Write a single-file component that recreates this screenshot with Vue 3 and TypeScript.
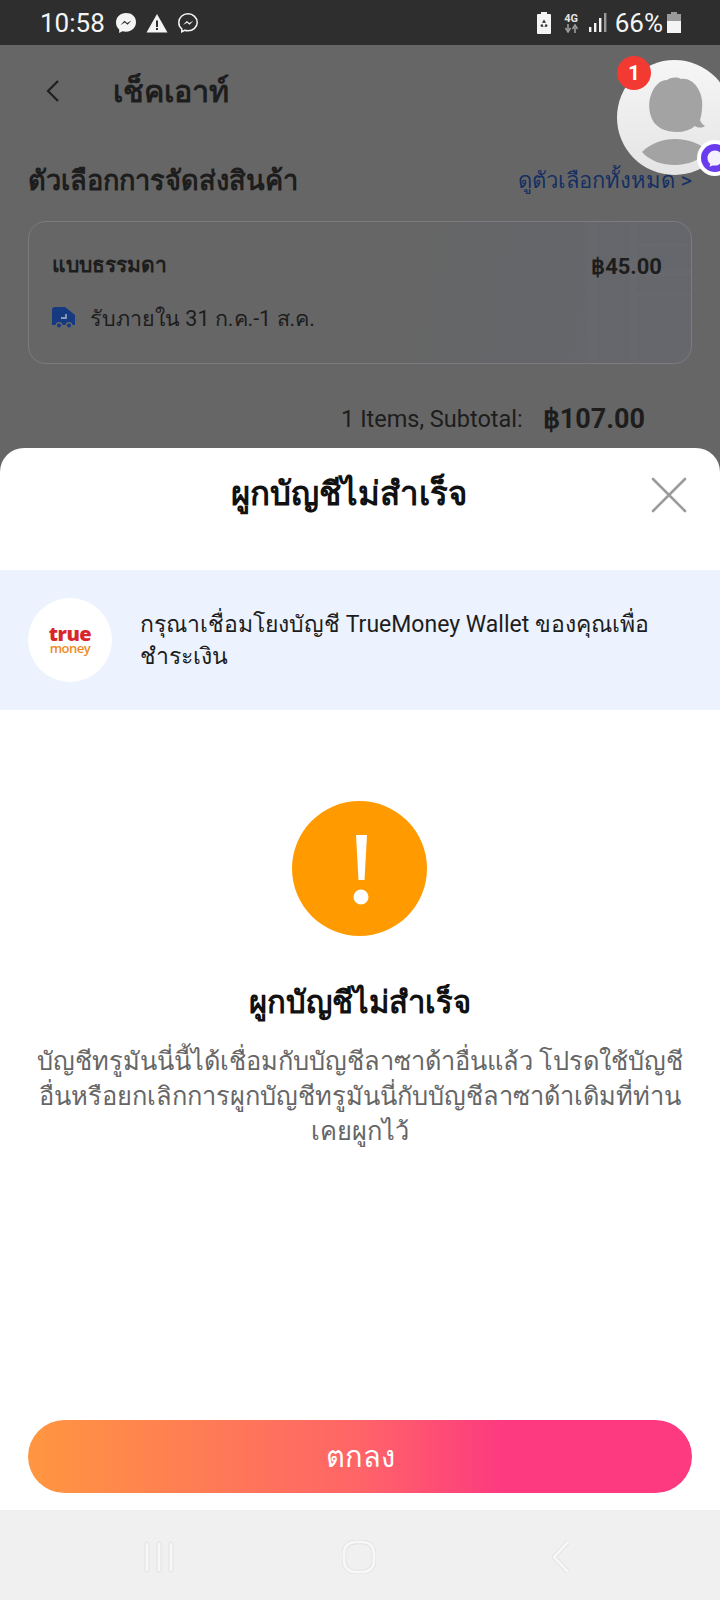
<script setup lang="ts">
const bodyLines = 'บัญชีทรูมันนี่นี้ได้เชื่อมกับบัญชีลาซาด้าอื่นแล้ว โปรดใช้บัญชีอื่นหรือยกเลิกการผูกบัญชีทรูมันนี่กับบัญชีลาซาด้าเดิมที่ท่านเคยผูกไว้'
</script>

<template>
  <div class="phone">
    <div class="status">
      <span class="time">10:58</span>
      <svg class="st" width="22" height="22" viewBox="0 0 22 22">
        <path d="M11 1C5.400 1 1 5.100 1 10.500c0 2.900 1.200 5.300 3.200 7v3.400l3.100-1.700c1.100.3 2.400.5 3.700.5 5.600 0 10-4.100 10-9.700S16.600 1 11 1z" fill="#f4f4f4" />
        <path d="M5.500 13l4-4.300 2.600 2.300 4.400-2.600-4 4.300-2.700-2.300z" fill="#2e2e2e" />
      </svg>
      <svg class="st" width="22" height="20" viewBox="0 0 22 20">
        <path d="M11 1L.5 19.500h21z" fill="#f4f4f4" />
        <path d="M10 7.500h2v6.500h-2zM10 15h2v2h-2z" fill="#2e2e2e" />
      </svg>
      <svg class="st" width="22" height="22" viewBox="0 0 22 22" fill="none">
        <path d="M11 1.800C5.900 1.800 1.800 5.500 1.800 10.400c0 2.700 1.100 4.900 3 6.400v3l2.800-1.500c1 .3 2.200.5 3.400.5 5.100 0 9.200-3.700 9.200-8.400S16.100 1.800 11 1.800z" stroke="#f4f4f4" stroke-width="1.500" />
        <path d="M6 13l3.800-4 2.500 2.100 4-2.300-3.700 4-2.500-2.100z" fill="#f4f4f4" />
      </svg>
      <span class="spacer"></span>
      <svg class="st-right" width="14" height="22" viewBox="0 0 14 22">
        <path d="M4 0h6v2h3a1 1 0 0 1 1 1v18a1 1 0 0 1-1 1H1a1 1 0 0 1-1-1V3a1 1 0 0 1 1-1h3z" fill="#f4f4f4" />
        <path d="M7 7.500l2 3.200H5zM3.500 13l1.700-1 1.400 2.700H4zM10.500 13l-1.700-1-1.400 2.700H10z" fill="#2e2e2e" />
      </svg>
      <div class="net">
        <span class="net-label">4G</span>
        <svg width="15" height="9" viewBox="0 0 15 9">
          <path d="M4 0v5.500M1.500 4L4 8l2.500-4M11 9V3.500M8.500 5L11 1l2.500 4" stroke="#9a9a9a" stroke-width="1.600" fill="none" />
        </svg>
      </div>
      <svg class="signal" width="18" height="19" viewBox="0 0 18 19">
        <rect x="0" y="14" width="2.400" height="5" fill="#f4f4f4" />
        <rect x="5" y="10" width="2.400" height="9" fill="#f4f4f4" />
        <rect x="10" y="5" width="2.400" height="14" fill="#f4f4f4" />
        <rect x="15" y="0" width="2.400" height="19" fill="#9a9a9a" />
      </svg>
      <span class="pct">66%</span>
      <svg class="batt" width="14" height="21" viewBox="0 0 14 21">
        <path d="M4 0h6v2h4v7H0V2h4z" fill="#9a9a9a" />
        <rect x="0" y="9" width="14" height="12" fill="#f4f4f4" />
      </svg>
    </div>

    <div class="page">
      <div class="topbar">
        <svg class="back" width="16" height="24" viewBox="0 0 16 24" fill="none">
          <path d="M13 2L3 12l10 10" stroke="#1f1f1f" stroke-width="2.200" />
        </svg>
        <span class="page-title">เช็คเอาท์</span>
      </div>

      <div class="section-head">
        <span class="section-title">ตัวเลือกการจัดส่งสินค้า</span>
        <span class="section-link">ดูตัวเลือกทั้งหมด &gt;</span>
      </div>

      <div class="ship-card">
        <div class="ship-row">
          <span class="ship-name">แบบธรรมดา</span>
          <span class="ship-price">฿45.00</span>
        </div>
        <div class="ship-eta">
          <svg width="23" height="22" viewBox="0 0 23 22">
            <path d="M0 3a3 3 0 0 1 3-3h10l10 8v10H0z" fill="#153a80" />
            <path d="M14 7v4h-5" stroke="#8f9cb8" stroke-width="1.800" fill="none" />
            <circle cx="7" cy="18.500" r="3.500" fill="#666" />
            <circle cx="7" cy="18.500" r="2" fill="#153a80" />
            <circle cx="17" cy="18.500" r="3.500" fill="#666" />
            <circle cx="17" cy="18.500" r="2" fill="#153a80" />
          </svg>
          <span>รับภายใน 31 ก.ค.-1 ส.ค.</span>
        </div>
      </div>

      <div class="subtotal">
        <span class="subtotal-label">1 Items, Subtotal:</span>
        <span class="subtotal-value">฿107.00</span>
      </div>
    </div>

    <!-- floating chat head -->
    <div class="chat-head">
      <svg class="chat-face" width="115" height="115" viewBox="0 0 115 115">
        <path d="M50 20c5-3 10-3 14-1 6-1 12 2 16 8 4 6 6 13 5 22-.5 5-1 8-2 11 1 3 3 5 5 6-3 2-7 2-10 0-5 4-11 6-18 6-11 0-21-4-25-13-3-7-4-16-1-24 3-9 9-15 16-15z" fill="#a3a3a3" />
        <path d="M25 92c9-9 21-13 33-13 14 0 26 5 33 12-8 9-20 14-33 14-13 0-25-4-33-13z" fill="#a3a3a3" />
      </svg>
      <span class="chat-count">1</span>
      <span class="chat-app">
        <svg width="28" height="28" viewBox="0 0 28 28">
          <circle cx="14" cy="14" r="14" fill="#6a3cf0" />
          <path d="M14 6.500c-4 0-7.500 3.200-7.500 7.500 0 2.400 1 4.400 2.700 5.800l-.7 3 3.300-1.400c.7.100 1.400.2 2.200.2 4.200 0 7.500-3.300 7.500-7.600S18 6.500 14 6.500z" fill="#f3f0ff" />
        </svg>
      </span>
    </div>

    <!-- bottom sheet over the dimmed checkout -->
    <div class="sheet">
      <div class="sheet-head">
        <span class="sheet-title">ผูกบัญชีไม่สำเร็จ</span>
        <svg class="close" width="36" height="36" viewBox="0 0 36 36" fill="none">
          <path d="M2 2l32 32M34 2L2 34" stroke="#9b9b9b" stroke-width="2.600" stroke-linecap="round" />
        </svg>
      </div>

      <div class="notice">
        <div class="logo">
          <span class="logo-true">true</span>
          <span class="logo-money">money</span>
        </div>
        <p class="notice-text">กรุณาเชื่อมโยงบัญชี TrueMoney Wallet ของคุณเพื่อ<br />ชำระเงิน</p>
      </div>

      <div class="result">
        <svg class="result-icon" width="135" height="135" viewBox="0 0 135 135">
          <circle cx="67.500" cy="67.500" r="67.500" fill="#ff9b00" />
          <path d="M64 34h11l-2.500 45h-6z" fill="#fff" />
          <circle cx="69" cy="96" r="7.500" fill="#fff" />
        </svg>
        <h2 class="result-title">ผูกบัญชีไม่สำเร็จ</h2>
        <p class="result-body">{{ bodyLines }}</p>
      </div>

      <button class="ok">ตกลง</button>
    </div>

    <div class="navbar">
      <svg width="30" height="32" viewBox="0 0 30 32" fill="#f7f7f7" stroke="#dcdcdc" stroke-width="0.800">
        <rect x="1" y="1" width="4" height="30" rx="2" />
        <rect x="13" y="1" width="4" height="30" rx="2" />
        <rect x="25" y="1" width="4" height="30" rx="2" />
      </svg>
      <svg width="34" height="34" viewBox="0 0 34 34" fill="none">
        <rect x="2" y="2" width="30" height="30" rx="11" stroke="#dcdcdc" stroke-width="4.500" />
        <rect x="2" y="2" width="30" height="30" rx="11" stroke="#f7f7f7" stroke-width="3.200" />
      </svg>
      <svg class="nav-back" width="20" height="34" viewBox="0 0 20 34" fill="none">
        <path d="M17 2L3 17l14 15" stroke="#dcdcdc" stroke-width="4.500" stroke-linejoin="round" />
        <path d="M17 2L3 17l14 15" stroke="#f7f7f7" stroke-width="3.200" stroke-linejoin="round" />
      </svg>
    </div>
  </div>
</template>

<style>
html,
body {
  margin: 0;
  background: #666;
}
</style>

<style scoped>
.phone {
  position: relative;
  width: 720px;
  height: 1600px;
  overflow: hidden;
  display: flex;
  flex-direction: column;
  background: #666;
  font-family: Roboto, "Noto Sans", "Liberation Sans", sans-serif;
}

.status {
  height: 45px;
  flex: none;
  background: #2e2e2e;
  display: flex;
  align-items: center;
  padding: 0 39px 0 40px;
  color: #f4f4f4;
}
.time {
  font-size: 26px;
  margin-right: 10px;
}
.st {
  margin-right: 9px;
}
.spacer {
  flex: 1;
}
.st-right {
  margin-right: 13px;
}
.net {
  display: flex;
  flex-direction: column;
  align-items: center;
  margin-right: 10px;
}
.net-label {
  font-size: 11px;
  line-height: 11px;
  font-weight: 700;
  color: #e4e4e4;
}
.signal {
  margin-right: 8px;
}
.pct {
  font-size: 26px;
  margin-right: 4px;
}

.page {
  flex: 1;
  padding: 0 28px;
  color: #1d1d1d;
}
.topbar {
  height: 92px;
  display: flex;
  align-items: center;
  padding-left: 17px;
}
.back {
  margin-right: 52px;
}
.page-title {
  font-size: 30.500px;
  font-weight: 700;
}
.section-head {
  display: flex;
  justify-content: space-between;
  align-items: center;
  height: 40px;
  margin-top: 23px;
}
.section-title {
  font-size: 27.200px;
  font-weight: 700;
}
.section-link {
  font-size: 22px;
  color: #142f63;
}
.ship-card {
  margin-top: 21px;
  height: 143px;
  box-sizing: border-box;
  border: 1px solid #7c7c80;
  border-radius: 18px;
  padding: 26px 29px 0 23px;
  background:
    linear-gradient(rgba(255, 255, 255, 0.012), rgba(255, 255, 255, 0.012)) 556px 0 / 12px 100% no-repeat,
    linear-gradient(rgba(255, 255, 255, 0.012), rgba(255, 255, 255, 0.012)) 601px 0 / 7px 100% no-repeat,
    linear-gradient(rgba(255, 255, 255, 0.012), rgba(255, 255, 255, 0.012)) 608px 21px / 60px 4px no-repeat,
    linear-gradient(rgba(255, 255, 255, 0.012), rgba(255, 255, 255, 0.012)) 608px 47px / 60px 7px no-repeat,
    linear-gradient(rgba(255, 255, 255, 0.012), rgba(255, 255, 255, 0.012)) 608px 71px / 60px 4px no-repeat,
    linear-gradient(100deg, #666 55%, #65666a 78%, #65676c 100%);
}
.ship-row {
  display: flex;
  justify-content: space-between;
  align-items: center;
  font-size: 21px;
  font-weight: 700;
}
.ship-price {
  font-size: 22px;
  padding-top: 3px;
}
.ship-eta {
  display: flex;
  align-items: center;
  gap: 15px;
  margin-top: 20px;
  font-size: 21.500px;
}
.subtotal {
  display: flex;
  justify-content: flex-end;
  align-items: center;
  margin-top: 39px;
  padding-right: 47px;
}
.subtotal-label {
  font-size: 23.500px;
  margin-right: 20px;
}
.subtotal-value {
  font-size: 27px;
  font-weight: 700;
}

.chat-head {
  position: absolute;
  left: 617px;
  top: 60px;
  width: 115px;
  height: 115px;
  border-radius: 50%;
  background: linear-gradient(#f6f6f6, #e4e4e4);
}
.chat-face {
  display: block;
}
.chat-count {
  position: absolute;
  left: 0;
  top: -4px;
  width: 34px;
  height: 34px;
  border-radius: 50%;
  background: #f33a32;
  color: #fff;
  font-size: 21px;
  font-weight: 700;
  line-height: 34px;
  text-align: center;
}
.chat-app {
  position: absolute;
  left: 80px;
  top: 80px;
  width: 36px;
  height: 36px;
  border-radius: 50%;
  background: #fff;
  display: flex;
  align-items: center;
  justify-content: center;
}

.sheet {
  position: absolute;
  left: 0;
  right: 0;
  top: 448px;
  height: 1062px;
  background: #fff;
  border-radius: 24px 24px 0 0;
  display: flex;
  flex-direction: column;
}
.sheet-head {
  position: relative;
  height: 122px;
  flex: none;
  text-align: center;
  padding-right: 22px;
  box-sizing: border-box;
}
.sheet-title {
  display: block;
  padding-top: 21px;
  font-size: 33px;
  font-weight: 700;
  line-height: 50px;
  color: #111;
}
.close {
  position: absolute;
  right: 33px;
  top: 29px;
}
.notice {
  height: 140px;
  flex: none;
  background: #ecf3fe;
  display: flex;
  align-items: center;
  padding: 0 28px;
}
.logo {
  width: 84px;
  height: 84px;
  border-radius: 50%;
  background: #fff;
  flex: none;
  display: flex;
  flex-direction: column;
  align-items: center;
  justify-content: center;
  font-family: "Open Sans", sans-serif;
  margin-right: 28px;
}
.logo-true {
  font-size: 20px;
  font-weight: 800;
  line-height: 16px;
  color: #d8262c;
  letter-spacing: -0.5px;
}
.logo-money {
  font-size: 13px;
  font-weight: 600;
  line-height: 13px;
  color: #ee8a26;
  letter-spacing: -0.5px;
}
.notice-text {
  margin: 1px 0 0;
  font-size: 23px;
  line-height: 32px;
  color: #1d1d1d;
}
.result {
  flex: 1;
  display: flex;
  flex-direction: column;
  align-items: center;
  padding: 91px 32px 0;
  text-align: center;
}
.result-icon {
  margin-left: -1px;
}
.result-title {
  margin: 45px 0 0;
  font-size: 31px;
  font-weight: 700;
  line-height: 44px;
  color: #111;
}
.result-body {
  margin: 19px 0 0;
  font-size: 25.400px;
  line-height: 35px;
  color: #666;
}
.ok {
  flex: none;
  margin: 0 28px 17px;
  height: 73px;
  border: none;
  border-radius: 37px;
  background: linear-gradient(90deg, #ff9640 0%, #ff6468 50%, #fd3980 72%, #fd3980 100%);
  color: #fff;
  font: inherit;
  font-size: 29px;
}

.navbar {
  position: absolute;
  left: 0;
  right: 0;
  bottom: 0;
  height: 90px;
  box-sizing: border-box;
  padding: 4px 0 0 144px;
  background: #f0f0f0;
  display: flex;
  align-items: center;
  gap: 168px;
}
.nav-back {
  margin-left: 7px;
}
</style>
